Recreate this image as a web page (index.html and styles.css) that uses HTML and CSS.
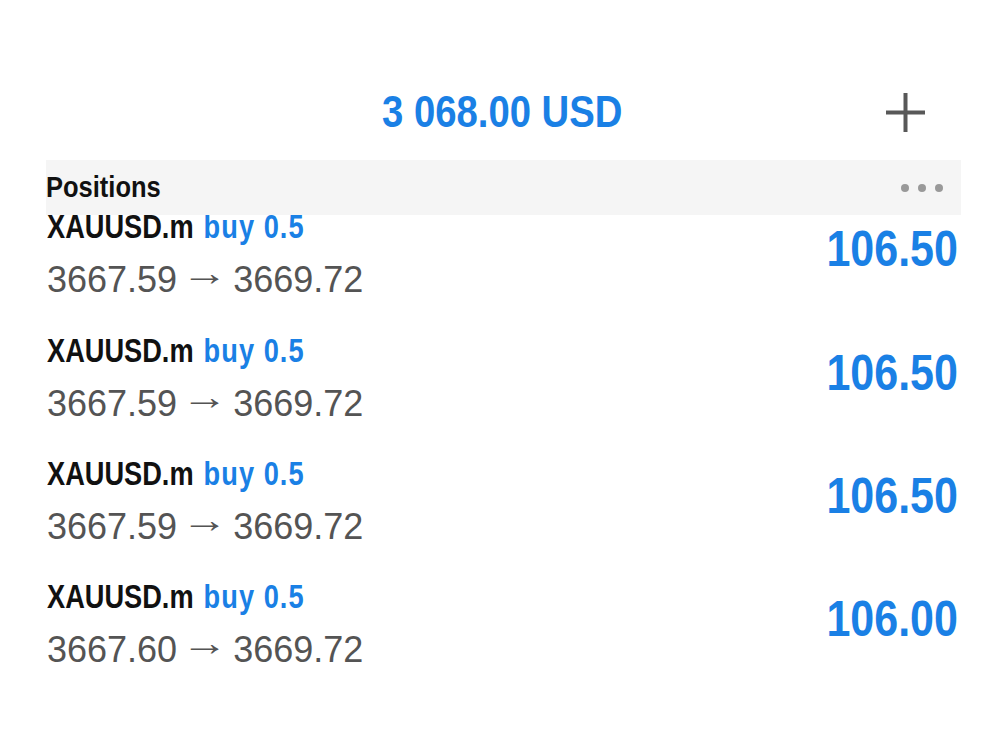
FILE: index.html
```html
<!DOCTYPE html>
<html>
<head>
<meta charset="utf-8">
<link rel="stylesheet" href="styles.css">
</head>
<body>
<div class="screen">
  <header class="top">
    <div class="balance"><span class="cond">3 068.00 USD</span></div>
    <svg class="plus" width="39" height="39" viewBox="0 0 39 39"><path d="M19.5 0V39M0 19.5H39" stroke="#585858" stroke-width="4" fill="none"/></svg>
  </header>
  <div class="section">
    <span class="section-title">Positions</span>
    <span class="dots"><i></i><i></i><i></i></span>
  </div>
  <ul class="list">
    <li class="row">
      <div class="info">
        <div class="title"><span class="cond">XAUUSD.m<span class="side">buy 0.5</span></span></div>
        <div class="prices">3667.59<span class="arrow">→</span>3669.72</div>
      </div>
      <div class="profit"><span class="cond">106.50</span></div>
    </li>
    <li class="row">
      <div class="info">
        <div class="title"><span class="cond">XAUUSD.m<span class="side">buy 0.5</span></span></div>
        <div class="prices">3667.59<span class="arrow">→</span>3669.72</div>
      </div>
      <div class="profit"><span class="cond">106.50</span></div>
    </li>
    <li class="row">
      <div class="info">
        <div class="title"><span class="cond">XAUUSD.m<span class="side">buy 0.5</span></span></div>
        <div class="prices">3667.59<span class="arrow">→</span>3669.72</div>
      </div>
      <div class="profit"><span class="cond">106.50</span></div>
    </li>
    <li class="row">
      <div class="info">
        <div class="title"><span class="cond">XAUUSD.m<span class="side">buy 0.5</span></span></div>
        <div class="prices">3667.60<span class="arrow">→</span>3669.72</div>
      </div>
      <div class="profit"><span class="cond">106.00</span></div>
    </li>
  </ul>
</div>
</body>
</html>
```
FILE: styles.css
```css
html, body {
  margin: 0;
  padding: 0;
  background: #fff;
}
.screen {
  width: 1000px;
  height: 750px;
  overflow: hidden;
  font-family: "Liberation Sans", Arial, sans-serif;
}
.cond {
  display: inline-block;
  white-space: nowrap;
}
.top {
  height: 160px;
  box-sizing: border-box;
  padding-top: 90px;
  display: grid;
  grid-template-columns: 1fr auto 1fr;
  align-items: start;
}
.balance {
  grid-column: 2;
  margin-left: 5px;
  font-weight: bold;
  font-size: 44px;
  line-height: 44px;
  color: #1a80e5;
}
.balance .cond {
  transform: scaleX(0.87);
  transform-origin: center;
}
.plus {
  grid-column: 3;
  justify-self: end;
  margin: 3px 75px 0 0;
}
.section {
  position: relative;
  z-index: 1;
  margin: 0 39px 0 46px;
  height: 55px;
  background: #f5f5f5;
  display: flex;
  align-items: center;
  justify-content: space-between;
  padding: 0 18px 0 0;
}
.section-title {
  display: inline-block;
  font-weight: bold;
  font-size: 30px;
  line-height: 30px;
  color: #111;
  transform: scaleX(0.85);
  transform-origin: left center;
  margin-top: -1px;
}
.dots {
  display: flex;
  gap: 9px;
}
.dots i {
  width: 8px;
  height: 8px;
  border-radius: 50%;
  background: #999;
}
.list {
  list-style: none;
  margin: -5.7px 0 0 0;
  padding: 0 42px 0 47px;
}
.row {
  display: flex;
  justify-content: space-between;
  align-items: flex-start;
  height: 123.33px;
}
.title {
  font-weight: bold;
  font-size: 34px;
  line-height: 34px;
  color: #111;
}
.title .cond {
  transform: scaleX(0.8);
  transform-origin: left center;
}
.side {
  color: #1a80e5;
  margin-left: 12.5px;
  letter-spacing: 1.3px;
}
.prices {
  margin-top: 19px;
  font-size: 36px;
  line-height: 36px;
  color: #545454;
  white-space: nowrap;
}
.arrow {
  display: inline-block;
  width: 56px;
  line-height: 16px;
  text-align: center;
  font-size: 36px;
  vertical-align: 7px;
  transform: scaleX(1.3);
}
.profit {
  font-weight: bold;
  font-size: 50px;
  line-height: 50px;
  margin-top: 15px;
  color: #1a80e5;
}
.profit .cond {
  transform: scaleX(0.86);
  transform-origin: right center;
}
```
